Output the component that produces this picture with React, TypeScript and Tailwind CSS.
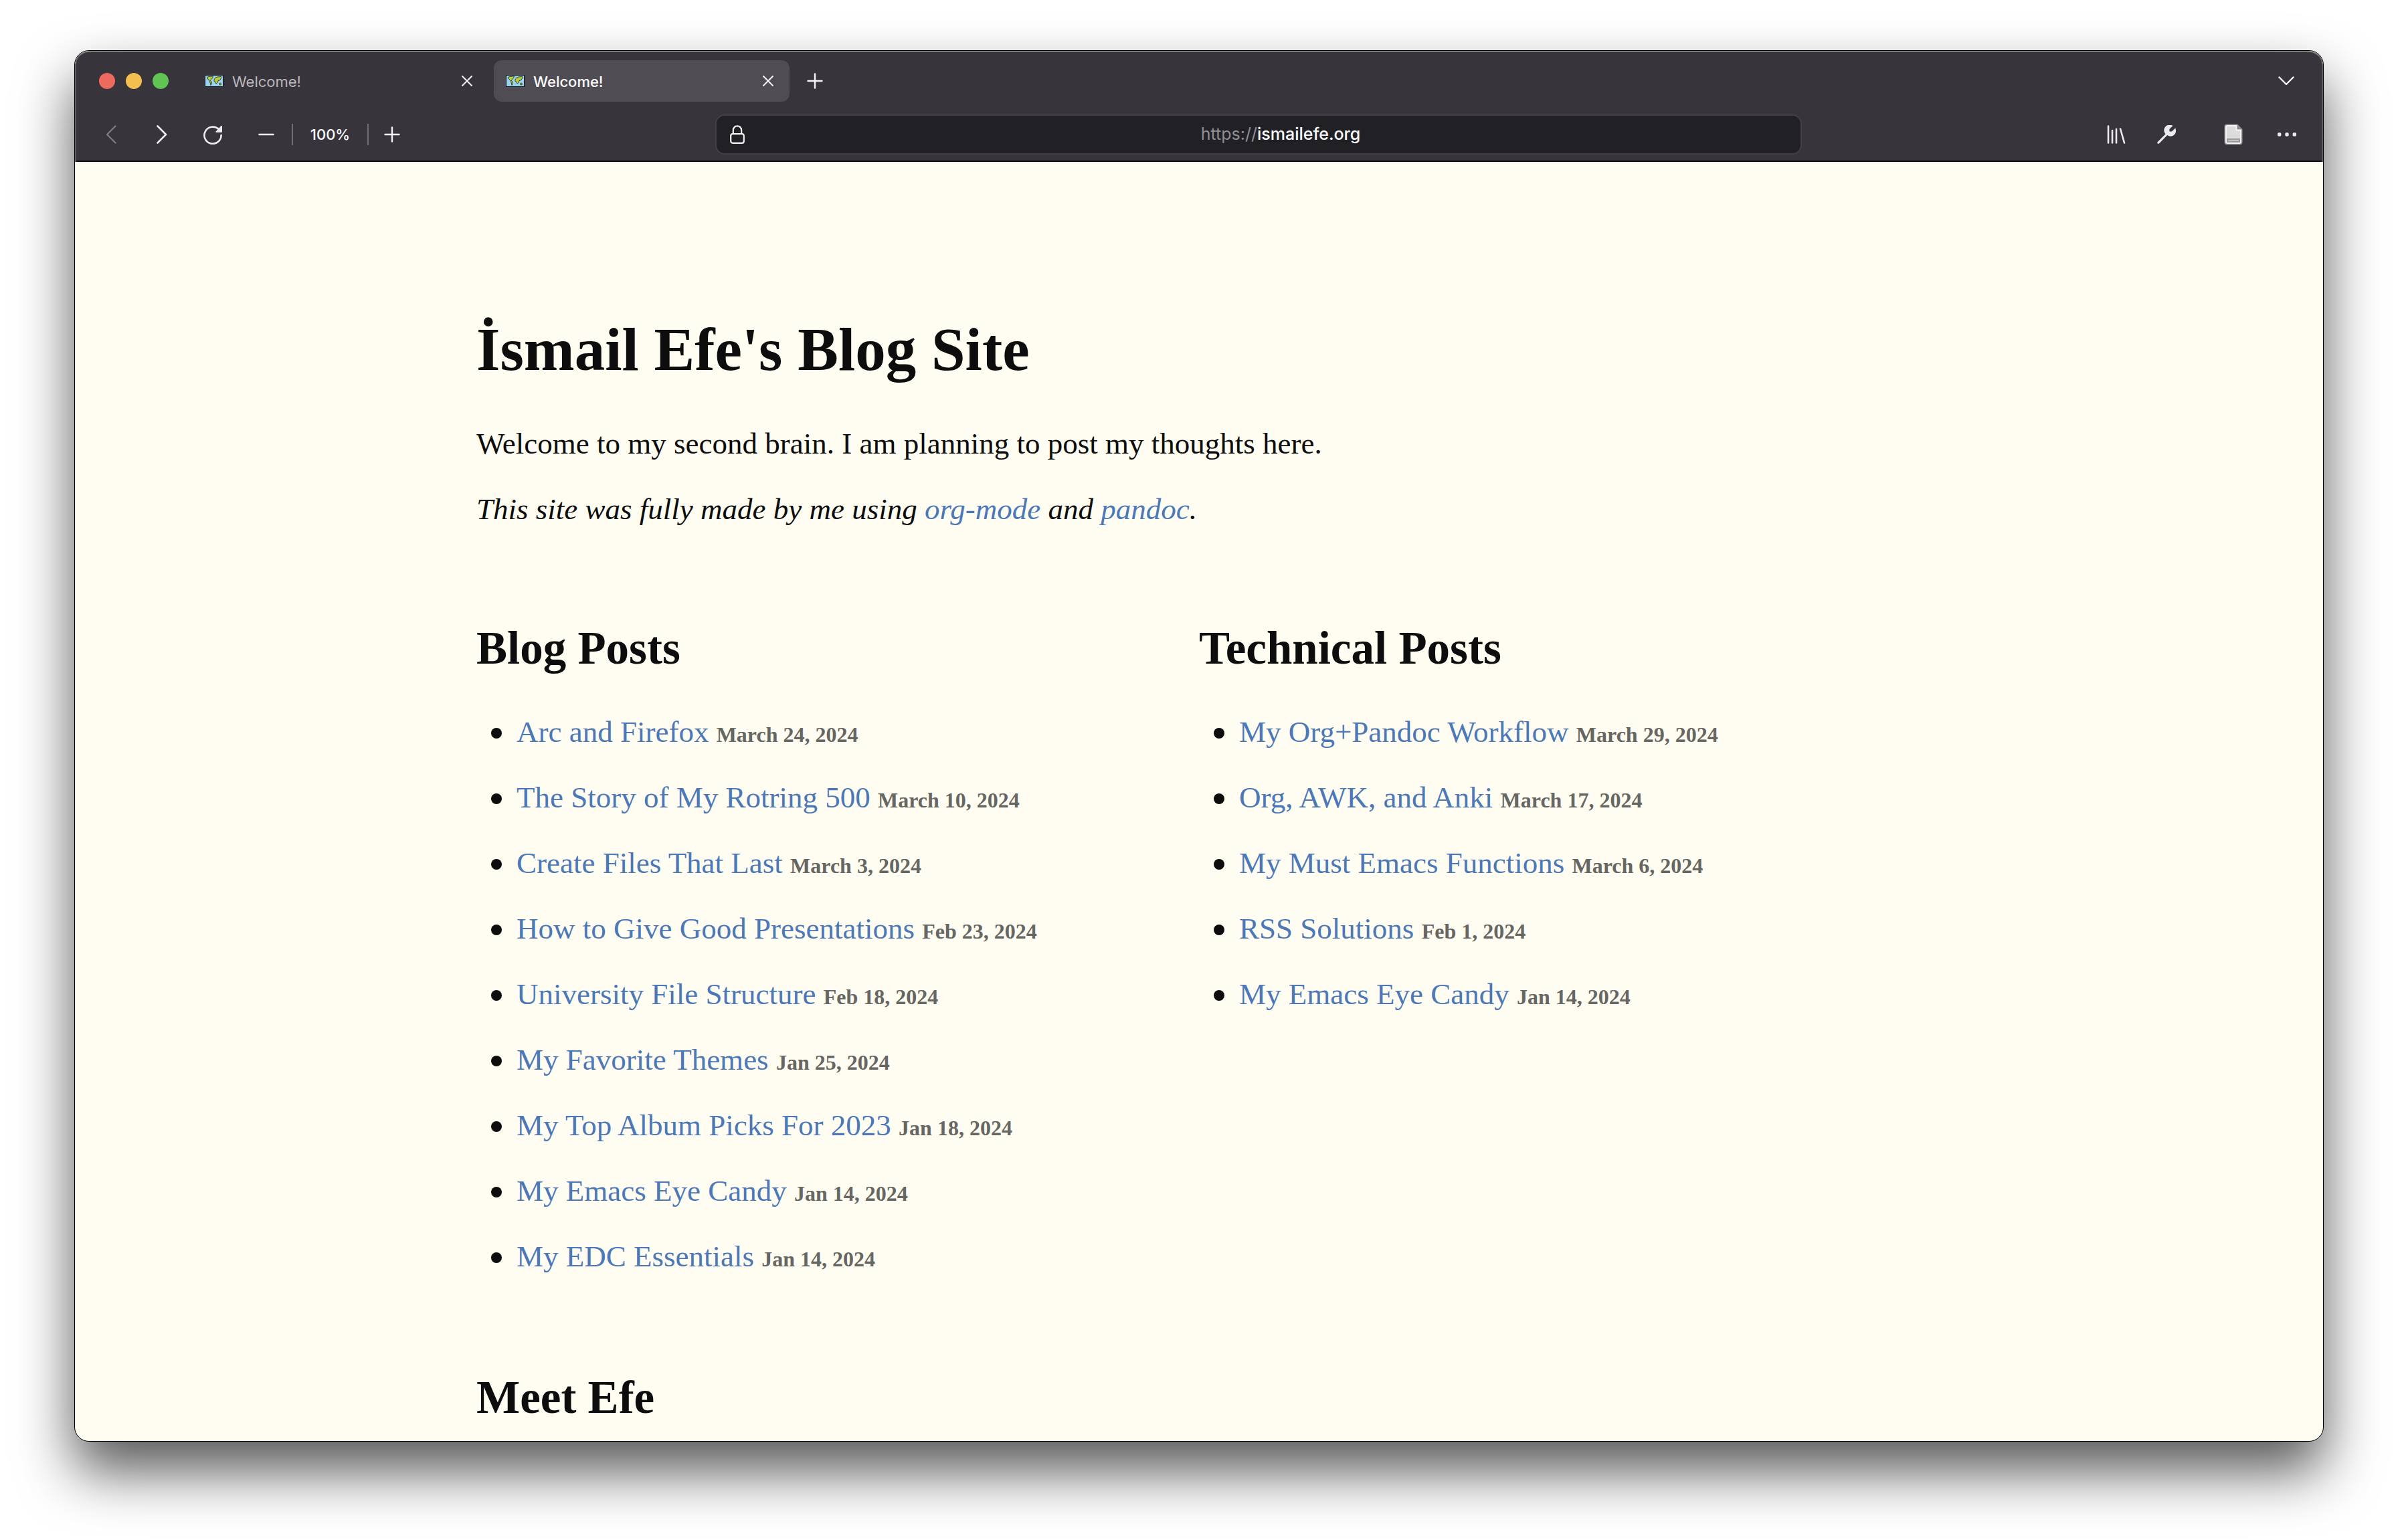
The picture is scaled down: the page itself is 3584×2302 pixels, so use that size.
import React from "react";

type Post = { title: string; date: string };

const blogPosts: Post[] = [
  { title: "Arc and Firefox", date: "March 24, 2024" },
  { title: "The Story of My Rotring 500", date: "March 10, 2024" },
  { title: "Create Files That Last", date: "March 3, 2024" },
  { title: "How to Give Good Presentations", date: "Feb 23, 2024" },
  { title: "University File Structure", date: "Feb 18, 2024" },
  { title: "My Favorite Themes", date: "Jan 25, 2024" },
  { title: "My Top Album Picks For 2023", date: "Jan 18, 2024" },
  { title: "My Emacs Eye Candy", date: "Jan 14, 2024" },
  { title: "My EDC Essentials", date: "Jan 14, 2024" },
];

const technicalPosts: Post[] = [
  { title: "My Org+Pandoc Workflow", date: "March 29, 2024" },
  { title: "Org, AWK, and Anki", date: "March 17, 2024" },
  { title: "My Must Emacs Functions", date: "March 6, 2024" },
  { title: "RSS Solutions", date: "Feb 1, 2024" },
  { title: "My Emacs Eye Candy", date: "Jan 14, 2024" },
];

function MapIcon() {
  return (
    <svg className="h-[18px] w-7 shrink-0" viewBox="0 0 28 18" aria-hidden="true">
      <rect x="0.5" y="0.5" width="27" height="17" fill="#9bd3f5" stroke="#111" />
      <path d="M3.5 3.5 L6 2.5 L12.5 2 L11.5 5 L9.5 6.5 L8 8.5 L10.5 10.500 L10.5 13 L9 15.5 L8.2 12 L7.5 9.5 L5.5 7.5 Z" fill="#b9cc3c" stroke="#26331a" strokeWidth="0.9" />
      <path d="M14 7 L16 4 L19 3 L24.500 2.5 L24.5 5 L22.5 8 L20 8.5 L19 11.500 L17 13 L16 10.5 L14 9.5 Z" fill="#b9cc3c" stroke="#26331a" strokeWidth="0.9" />
      <circle cx="23" cy="13.5" r="1.5" fill="#b9cc3c" stroke="#26331a" strokeWidth="0.9" />
    </svg>
  );
}

function CloseIcon() {
  return (
    <svg className="h-4 w-4" viewBox="0 0 16 16" fill="none" stroke="#f4f4f6" strokeWidth="2" strokeLinecap="round" aria-hidden="true">
      <path d="M1 1 L15 15 M15 1 L1 15" />
    </svg>
  );
}

function PlusIcon() {
  return (
    <svg className="h-6 w-6" viewBox="0 0 24 24" fill="none" stroke="#f4f4f6" strokeWidth="2.4" strokeLinecap="round" aria-hidden="true">
      <path d="M12 1.5 V22.5 M1.5 12 H22.5" />
    </svg>
  );
}

function Tab({ active = false }: { active?: boolean }) {
  return (
    <div className={active ? "flex h-[62px] w-[442px] items-center rounded-xl bg-[#4f4c53] pl-[18px] pr-6" : "flex h-[62px] w-[442px] items-center rounded-xl pl-[18px] pr-6"}>
      <button type="button" role="tab" aria-selected={active} className={active ? "flex flex-1 items-center gap-[13px] text-[22px] font-medium text-[#fbfbfe]" : "flex flex-1 items-center gap-[13px] text-[22px] text-[#b9b8bc]"}>
        <MapIcon />
        <span className="pt-[2px]">Welcome!</span>
      </button>
      <button type="button" aria-label="Close tab">
        <CloseIcon />
      </button>
    </div>
  );
}

function PostList({ heading, posts }: { heading: string; posts: Post[] }) {
  return (
    <section className="flex-1">
      <h2 className="text-[69px] leading-[80px] font-bold">{heading}</h2>
      <ul className="mt-[38px]">
        {posts.map((post) => (
          <li key={post.title} className="flex h-[98px] items-center">
            <span className="mr-[22px] ml-[22px] h-4 w-4 rounded-full bg-[#0d0d0d]" aria-hidden="true" />
            <p>
              <a href="#" className="text-[#4c78b8]">{post.title}</a>{" "}
              <span className="text-[32px] font-bold text-[#666662]">{post.date}</span>
            </p>
          </li>
        ))}
      </ul>
    </section>
  );
}

export default function App() {
  return (
    <div className="h-screen overflow-hidden bg-white px-[111px] pt-[75px] pb-[147px]">
      <div className="flex h-full flex-col overflow-hidden rounded-[22px] border border-black bg-[#fffdf1] shadow-[0_44px_84px_rgba(0,0,0,0.66)]">
        <header className="shrink-0 rounded-t-[21px] border-x-2 border-t-2 border-x-[#5e5c61] border-t-[#7b7a7d] bg-[#38343b] font-['Inter',sans-serif]">
          <div className="flex h-[86px] items-center pr-[41px] pl-[34px]">
            <div className="flex gap-4">
              <button type="button" aria-label="Close window" className="h-6 w-6 rounded-full bg-[#ed6a5e]" />
              <button type="button" aria-label="Minimize window" className="h-6 w-6 rounded-full bg-[#f4bf4f]" />
              <button type="button" aria-label="Zoom window" className="h-6 w-6 rounded-full bg-[#61c554]" />
            </div>
            <div role="tablist" className="ml-9 flex gap-2">
              <Tab />
              <Tab active />
            </div>
            <button type="button" aria-label="New tab" className="ml-[26px]">
              <PlusIcon />
            </button>
            <button type="button" aria-label="List all tabs" className="ml-auto">
              <svg className="h-[14px] w-6" viewBox="0 0 24 14" fill="none" stroke="#fbfbfe" strokeWidth="2.4" strokeLinecap="round" strokeLinejoin="round" aria-hidden="true">
                <path d="M1.5 1.5 L12 12 L22.5 1.5" />
              </svg>
            </button>
          </div>
          <nav className="flex h-[78px] items-center border-b-2 border-[#0c0c0d] pr-[38px] pb-[2px] pl-[44px]">
            <div className="flex grow-[911] basis-0 items-center">
              <button type="button" aria-label="Back">
                <svg className="h-7 w-4" viewBox="0 0 16 28" fill="none" stroke="#7d7b80" strokeWidth="2.4" strokeLinecap="round" strokeLinejoin="round" aria-hidden="true">
                  <path d="M14.5 1.5 L2 14 L14.5 26.5" />
                </svg>
              </button>
              <button type="button" aria-label="Forward" className="ml-[60px]">
                <svg className="h-7 w-4" viewBox="0 0 16 28" fill="none" stroke="#ebebed" strokeWidth="2.6" strokeLinecap="round" strokeLinejoin="round" aria-hidden="true">
                  <path d="M1.5 1.5 L14 14 L1.5 26.5" />
                </svg>
              </button>
              <button type="button" aria-label="Reload" className="ml-[53px]">
                <svg className="h-[30px] w-[30px]" viewBox="0 0 30 30" fill="none" aria-hidden="true">
                  <path d="M23.8 7.2 A12.6 12.6 0 1 0 27.6 16" stroke="#ebebed" strokeWidth="2.6" strokeLinecap="round" />
                  <path d="M27.6 2 H29 V11 Q29 12 28 12 H20 Q18.800 11.400 19.600 10.500 Z" fill="#ebebed" />
                </svg>
              </button>
              <button type="button" aria-label="Zoom out" className="ml-[53px]">
                <svg className="h-6 w-6" viewBox="0 0 24 24" stroke="#ebebed" strokeWidth="2.6" strokeLinecap="round" aria-hidden="true">
                  <path d="M1.500 12 H22.500" />
                </svg>
              </button>
              <span className="ml-[26px] h-8 w-[2px] bg-[#6f6d72]" />
              <button type="button" className="w-[111px] text-center text-[22px] font-medium text-[#fbfbfe]">100%</button>
              <span className="mr-[23px] h-8 w-[2px] bg-[#6f6d72]" />
              <button type="button" aria-label="Zoom in">
                <PlusIcon />
              </button>
            </div>
            <div className="flex h-[60px] w-[1624px] items-center rounded-[14px] border-2 border-[#424046] bg-[#212025] pl-5">
              <svg className="h-7 w-[22px] shrink-0" viewBox="0 0 22 28" fill="none" stroke="#f4f4f6" strokeWidth="2.200" aria-hidden="true">
                <rect x="1.200" y="13.200" width="19.600" height="13.600" rx="2.800" />
                <path d="M4.800 13 V7.500 A6.200 6.200 0 0 1 17.200 7.500 V13" />
              </svg>
              <div className="ml-[24px] flex flex-1 items-center justify-center text-[25px]">
                <label htmlFor="address" className="text-[#8f8e93]">https://</label>
                <input id="address" type="text" defaultValue="ismailefe.org" className="field-sizing-content bg-transparent font-medium text-[#fbfbfe] outline-none" />
              </div>
            </div>
            <div className="flex grow-[739] basis-0 items-center justify-end">
              <button type="button" aria-label="Library">
                <svg className="h-7 w-7" viewBox="0 0 28 28" stroke="#ebebed" strokeWidth="2.600" strokeLinecap="round" aria-hidden="true">
                  <path d="M2 1.500 V26.500 M8 8 V26.500 M14 6 V26.500 M20 5.500 L26 26.500" />
                </svg>
              </button>
              <button type="button" aria-label="Developer tools" className="ml-[47px]">
                <svg className="h-7 w-7" viewBox="0 0 28 28" fill="#ebebed" aria-hidden="true">
                  <path d="M0.700 25.300 L12.600 13.200 A8 8 0 0 1 20.500 0 Q22.500 0 23.500 1 L18.400 6 V9.600 H22 L27.200 4.600 Q28 6 28 8 A8 8 0 0 1 15.200 15 L3.300 27.200 Q2 28.400 0.800 27.400 Q-0.300 26.500 0.700 25.300 Z" />
                </svg>
              </button>
              <button type="button" aria-label="Reader extension" className="ml-[72px]">
                <svg className="h-8 w-7" viewBox="0 0 28 32" aria-hidden="true">
                  <path d="M4 0.500 H20 L27.500 8 V27 Q27.500 31.500 23.500 31.500 H4.500 Q0.500 31.500 0.500 27.500 V4.500 Q0.500 0.500 4 0.500 Z" fill="#8b8b8d" />
                  <path d="M4.500 3 H18.500 V9.500 H25 V27 Q25 29 23 29 H5 Q3 29 3 27 V4.500 Q3 3 4.500 3 Z" fill="#dcdcdc" stroke="#f5f5f5" strokeWidth="2" />
                  <rect x="4" y="22" width="20" height="6" fill="#9a9a9a" />
                  <rect x="6" y="24" width="16" height="2" fill="#c4c4c4" />
                </svg>
              </button>
              <button type="button" aria-label="Menu" className="ml-[52px]">
                <svg className="h-[6px] w-7" viewBox="0 0 28 6" fill="#ebebed" aria-hidden="true">
                  <rect x="0" y="0.300" width="5.400" height="5.400" rx="1.800" />
                  <rect x="11.300" y="0.300" width="5.400" height="5.400" rx="1.800" />
                  <rect x="22.600" y="0.300" width="5.400" height="5.400" rx="1.800" />
                </svg>
              </button>
            </div>
          </nav>
        </header>
        <main className="min-h-0 flex-1 overflow-hidden font-['Liberation_Serif',serif] text-[45px] leading-[54px] text-[#0d0d0d]">
          <div className="mx-auto max-w-[2160px] pt-[228px]">
            <h1 className="text-[91px] leading-[106px] font-bold">İsmail Efe's Blog Site</h1>
            <p className="mt-[60px]">Welcome to my second brain. I am planning to post my thoughts here.</p>
            <p className="mt-[44px] italic">
              This site was fully made by me using <a href="#" className="text-[#4c78b8]">org-mode</a> and <a href="#" className="text-[#4c78b8]">pandoc</a>.
            </p>
            <div className="mt-[141px] flex">
              <PostList heading="Blog Posts" posts={blogPosts} />
              <PostList heading="Technical Posts" posts={technicalPosts} />
            </div>
            <h2 className="mt-[120px] text-[69px] leading-[80px] font-bold">Meet Efe</h2>
          </div>
        </main>
      </div>
    </div>
  );
}
